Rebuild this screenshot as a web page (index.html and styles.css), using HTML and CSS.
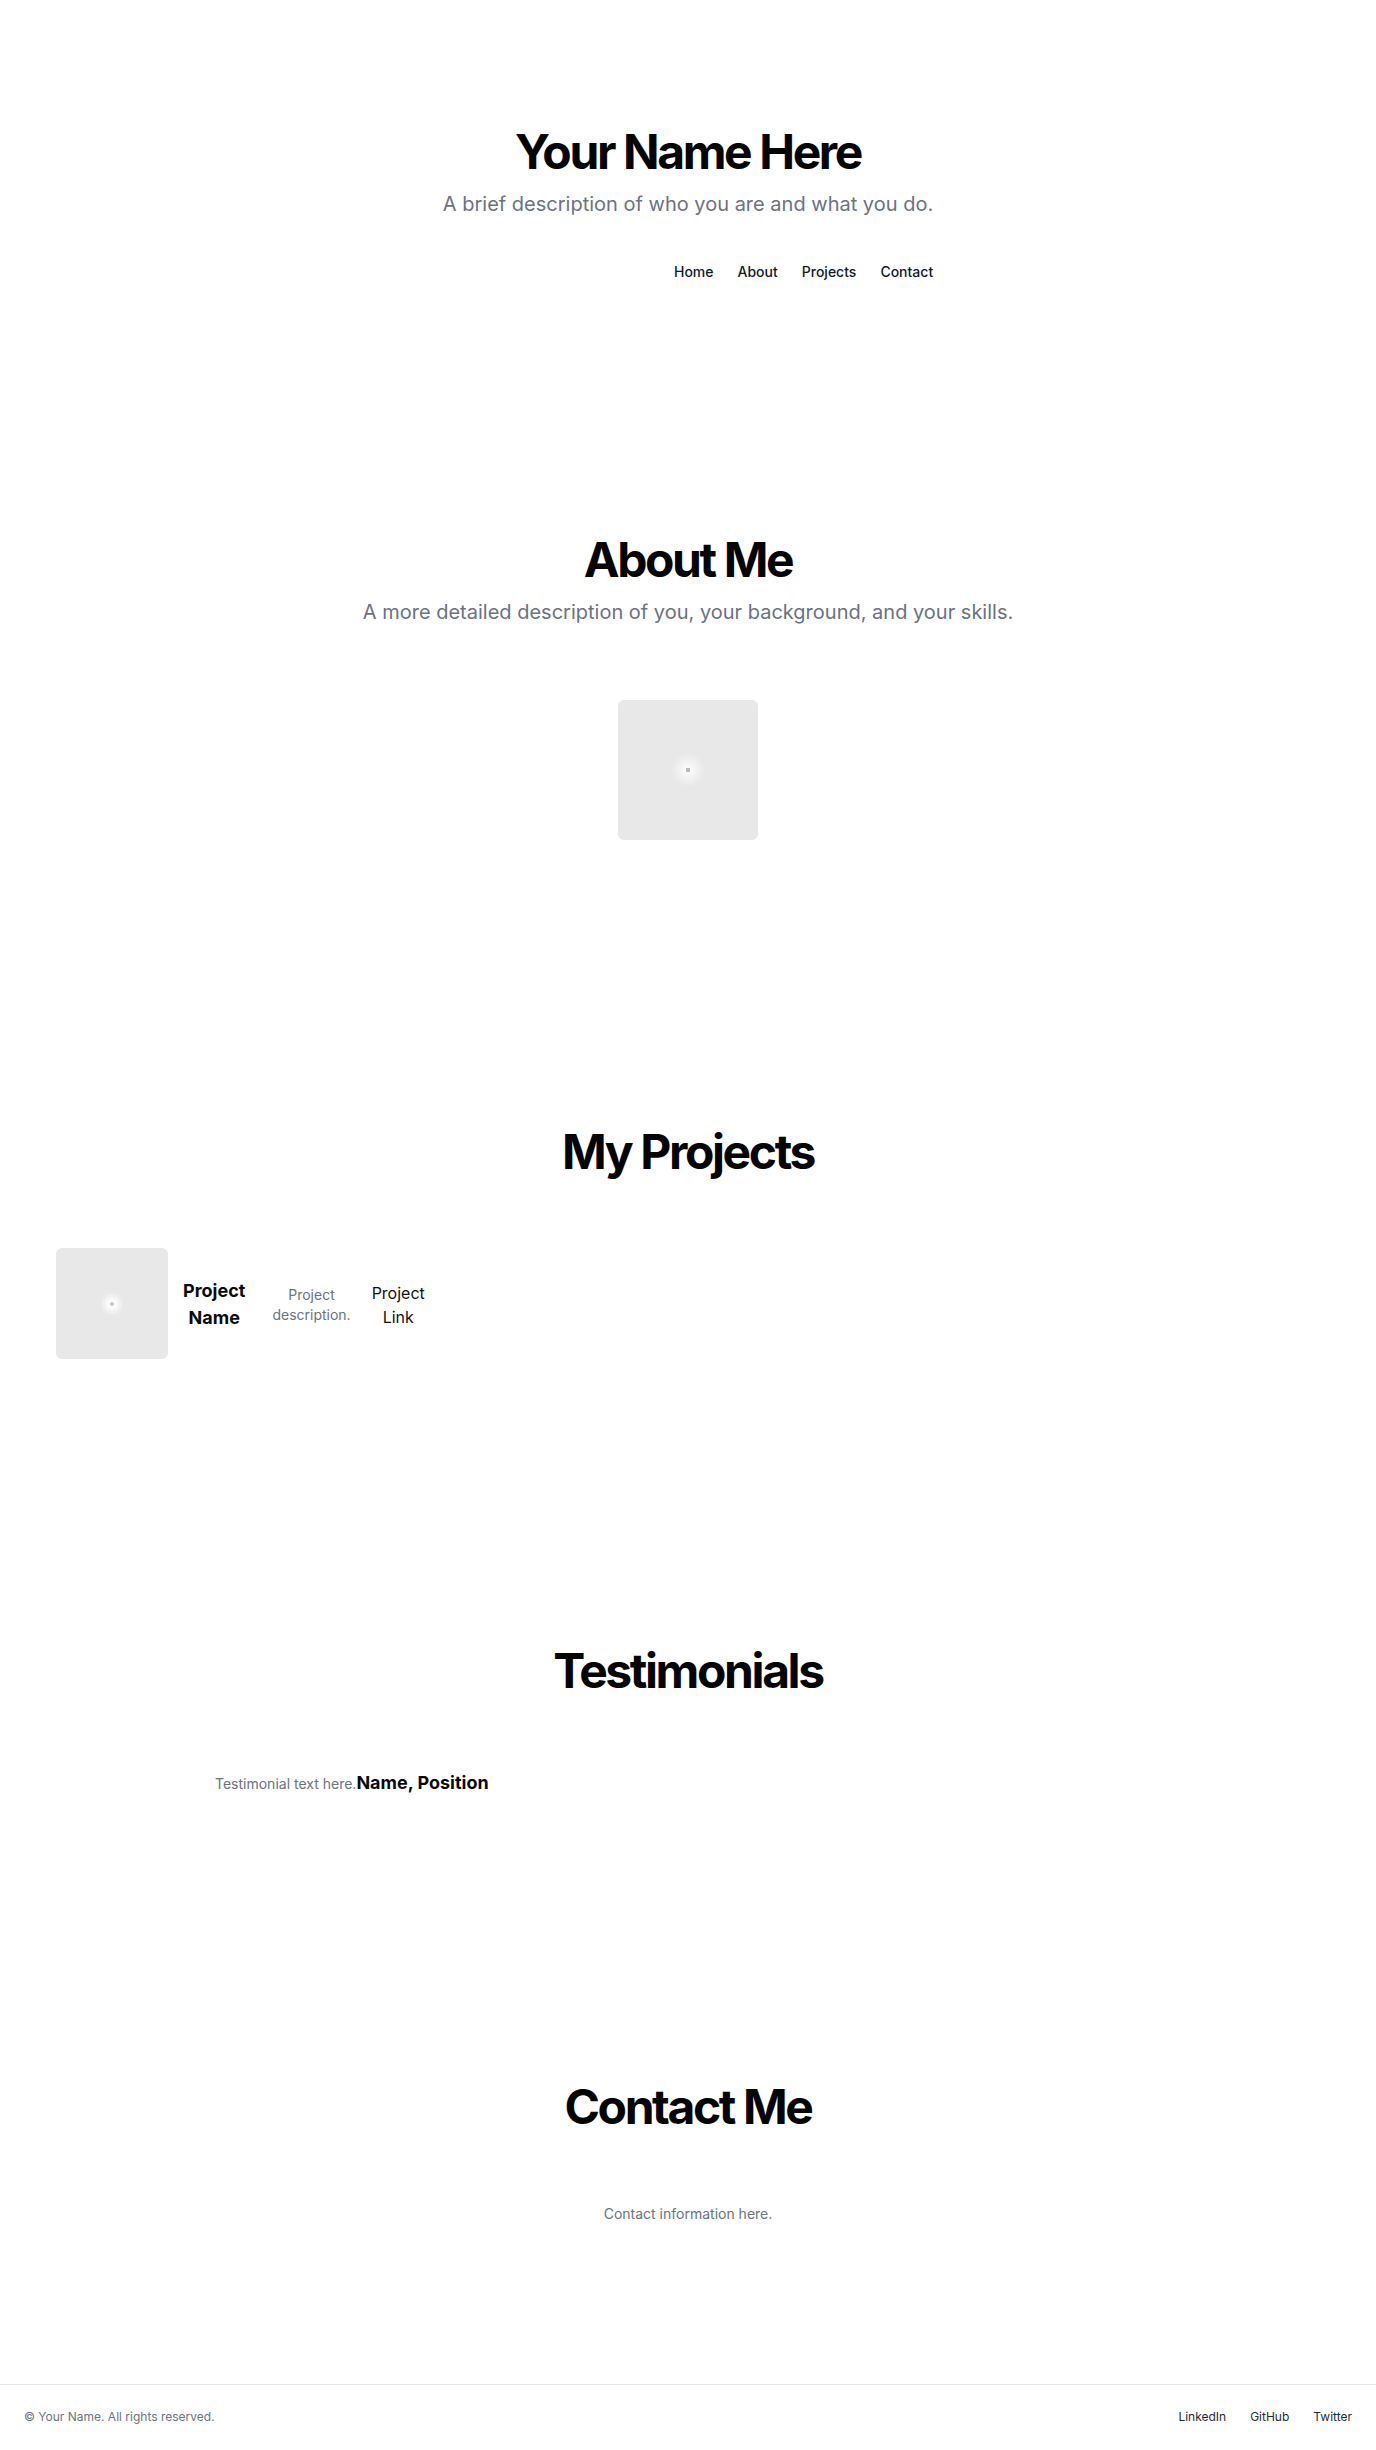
FILE: index.html
```html
<!DOCTYPE html>
<html lang="en">
<head>
<meta charset="utf-8">
<title>Your Name Here</title>
<link rel="stylesheet" href="styles.css">
</head>
<body>
<header class="hero">
  <div class="hero-inner">
    <h1 class="title">Your Name Here</h1>
    <p class="lead">A brief description of who you are and what you do.</p>
    <nav class="nav">
      <a href="#home">Home</a>
      <a href="#about">About</a>
      <a href="#projects">Projects</a>
      <a href="#contact">Contact</a>
    </nav>
  </div>
</header>

<section class="section" id="about">
  <h2 class="title">About Me</h2>
  <p class="lead">A more detailed description of you, your background, and your skills.</p>
  <div class="about-media">
    <div class="photo photo-lg">
      <svg width="40" height="40" viewBox="0 0 40 40" aria-hidden="true">
        <defs>
          <radialGradient id="glow1" cx="50%" cy="50%" r="50%">
            <stop offset="0%" stop-color="#ffffff" stop-opacity="0.9"/>
            <stop offset="60%" stop-color="#ffffff" stop-opacity="0.35"/>
            <stop offset="100%" stop-color="#ffffff" stop-opacity="0"/>
          </radialGradient>
        </defs>
        <circle cx="20" cy="20" r="17" fill="url(#glow1)"/>
        <rect x="18" y="18" width="4" height="4" fill="#b8b8b8"/>
      </svg>
    </div>
  </div>
</section>

<section class="section section-projects" id="projects">
  <h2 class="title">My Projects</h2>
  <div class="projects">
    <article class="project">
      <div class="photo photo-sm">
        <svg width="32" height="32" viewBox="0 0 32 32" aria-hidden="true">
          <defs>
            <radialGradient id="glow2" cx="50%" cy="50%" r="50%">
              <stop offset="0%" stop-color="#ffffff" stop-opacity="0.9"/>
              <stop offset="70%" stop-color="#ffffff" stop-opacity="0.4"/>
              <stop offset="100%" stop-color="#ffffff" stop-opacity="0"/>
            </radialGradient>
          </defs>
          <circle cx="16" cy="16" r="12" fill="url(#glow2)"/>
          <circle cx="16" cy="16" r="5" fill="none" stroke="#ffffff" stroke-width="1.5" opacity="0.8"/>
          <circle cx="16" cy="16" r="1.8" fill="#bdbdbd"/>
        </svg>
      </div>
      <h3 class="project-name">Project Name</h3>
      <p class="project-desc">Project description.</p>
      <a class="project-link" href="#">Project Link</a>
    </article>
  </div>
</section>

<section class="section" id="testimonials">
  <h2 class="title">Testimonials</h2>
  <div class="testimonials">
    <div class="testimonial">
      <p class="quote">Testimonial text here.</p>
      <h4 class="author">Name, Position</h4>
    </div>
  </div>
</section>

<section class="section section-contact" id="contact">
  <h2 class="title">Contact Me</h2>
  <div class="contact">
    <p class="contact-text">Contact information here.</p>
  </div>
</section>

<footer class="footer">
  <p class="copy">© Your Name. All rights reserved.</p>
  <div class="social">
    <a href="#">LinkedIn</a>
    <a href="#">GitHub</a>
    <a href="#">Twitter</a>
  </div>
</footer>
</body>
</html>
```

FILE: styles.css
```css
* { box-sizing: border-box; }

body {
  margin: 0;
  font-family: "Inter", "Liberation Sans", sans-serif;
  color: #0a0a0a;
  background: #ffffff;
}

a { color: inherit; text-decoration: none; }

.hero {
  padding: 128px 24px 126px;
  display: flex;
  justify-content: center;
}

.hero-inner {
  display: flex;
  flex-direction: column;
  align-items: center;
}

.title {
  margin: 0;
  font-size: 48px;
  line-height: 1;
  font-weight: 700;
  letter-spacing: -0.05em;
  text-align: center;
  color: #050505;
}

.lead {
  margin: 16px 0 0;
  font-size: 20px;
  line-height: 24px;
  color: #6b7280;
  text-align: center;
}

.nav {
  align-self: flex-end;
  display: flex;
  gap: 24px;
  margin-top: 46px;
  font-size: 14px;
  line-height: 20px;
  font-weight: 500;
  color: #111827;
}

.section {
  padding: 128px 24px;
}

.about-media {
  margin-top: 44px;
  padding: 32px;
  display: flex;
  justify-content: center;
}

.photo {
  background: #e8e8e8;
  border-radius: 6px;
  display: flex;
  align-items: center;
  justify-content: center;
  flex-shrink: 0;
}

.photo-lg { width: 140px; height: 140px; }
.photo-sm { width: 112px; height: 111px; }

.projects {
  margin-top: 40px;
  padding: 32px;
}

.project {
  display: flex;
  align-items: center;
}

.project-name {
  margin: 0 0 0 15px;
  width: min-content;
  font-size: 18px;
  line-height: 27px;
  font-weight: 700;
  text-align: center;
}

.project-desc {
  margin: 2px 0 0 27px;
  width: min-content;
  font-size: 14px;
  line-height: 20px;
  color: #6b7280;
  text-align: center;
}

.project-link {
  margin: 2px 0 0 21px;
  width: min-content;
  font-size: 16px;
  line-height: 24px;
  color: #111111;
  text-align: center;
}

.testimonials {
  margin-top: 44px;
  padding: 32px;
}

.testimonial {
  max-width: 946px;
  margin: 0 auto;
  display: flex;
  align-items: baseline;
}

.quote {
  margin: 0;
  font-size: 14px;
  line-height: 20px;
  color: #6b7280;
}

.author {
  margin: 0;
  font-size: 18px;
  line-height: 24px;
  font-weight: 700;
}

.contact {
  margin-top: 41px;
  padding: 32px;
}

.contact-text {
  margin: 0;
  font-size: 14px;
  line-height: 20px;
  color: #6b7280;
  text-align: center;
}

.footer {
  border-top: 1px solid #e5e7eb;
  padding: 24px;
  display: flex;
  justify-content: space-between;
  align-items: center;
  font-size: 12px;
  line-height: 16px;
}

.copy {
  margin: 0;
  color: #6b7280;
}

.social {
  display: flex;
  gap: 24px;
  color: #1f2937;
}
```
